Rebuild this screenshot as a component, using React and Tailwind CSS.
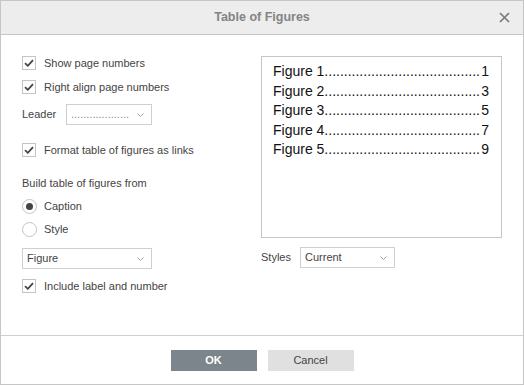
const font = { fontFamily: '"Liberation Sans", Arial, sans-serif' };

function Check({ label, className = "" }) {
  return (
    <label className={`flex items-center h-4 ${className}`}>
      <span className="w-[14px] h-[14px] border border-[#c4c4c4] bg-white flex items-center justify-center">
        <svg width="10" height="8" viewBox="0 0 10 8">
          <path d="M1 4.2 L3.8 6.8 L9 1.2" fill="none" stroke="#444" strokeWidth="1.8" />
        </svg>
      </span>
      <span className="ml-[8px] text-[11px] text-[#444]">{label}</span>
    </label>
  );
}

function Radio({ label, checked, className = "" }) {
  return (
    <label className={`flex items-center h-4 ${className}`}>
      <span className="w-[15px] h-[15px] rounded-full border border-[#c4c4c4] bg-white flex items-center justify-center">
        {checked && <span className="w-[7px] h-[7px] rounded-full bg-[#444]" />}
      </span>
      <span className="ml-[7px] text-[11px] text-[#444]">{label}</span>
    </label>
  );
}

function Chevron() {
  return (
    <svg width="7" height="4" viewBox="0 0 7 4" className="shrink-0">
      <path d="M0.5 0.5 L3.5 3.5 L6.5 0.5" fill="none" stroke="#9a9a9a" strokeWidth="0.9" />
    </svg>
  );
}

function Select({ value, className = "", muted }) {
  return (
    <div className={`h-[21px] border border-[#cfcfcf] bg-white flex items-center pl-[4px] pr-[7px] ${className}`}>
      <span className={`flex-1 whitespace-nowrap text-[11px] ${muted ? "text-[#888]" : "text-[#444]"}`}>{value}</span>
      <Chevron />
    </div>
  );
}

const entries = [
  ["Figure 1", "1"],
  ["Figure 2", "3"],
  ["Figure 3", "5"],
  ["Figure 4", "7"],
  ["Figure 5", "9"],
];

const leader = "........................................";

export default function App() {
  return (
    <div style={font} className="w-[524px] h-[385px] bg-white border border-[#c6c6c6] flex flex-col overflow-hidden">
      {/* header */}
      <div className="h-[34px] shrink-0 bg-[#ededed] border-b border-[#c6c6c6] relative flex items-center justify-center">
        <span className="text-[12.5px] font-bold text-[#848484]">Table of Figures</span>
        <svg width="11" height="11" viewBox="0 0 11 11" className="absolute right-[13px] top-[11px]">
          <path d="M1 1 L10 10 M10 1 L1 10" stroke="#777" strokeWidth="1.6" />
        </svg>
      </div>

      {/* body */}
      <div className="flex-1 flex">
        <div className="w-[260px] pl-[21px] pt-[20px] flex flex-col">
          <Check label="Show page numbers" />
          <Check label="Right align page numbers" className="mt-[8px]" />
          <div className="flex items-center mt-[9px]">
            <span className="text-[11px] text-[#444] w-[44px]">Leader</span>
            <Select value="..................." muted className="w-[86px]" />
          </div>
          <Check label="Format table of figures as links" className="mt-[17px]" />
          <div className="mt-[17px] h-4 flex items-center text-[11px] text-[#444]">Build table of figures from</div>
          <Radio label="Caption" checked className="mt-[7px]" />
          <Radio label="Style" className="mt-[7px]" />
          <Select value="Figure" className="w-[130px] mt-[11px]" />
          <Check label="Include label and number" className="mt-[9px]" />
        </div>

        <div className="flex flex-col pt-[21px]">
          <div className="w-[241px] h-[182px] border border-[#c6c6c6] pl-[11px] pr-[12px] pt-[5px] text-[14px] leading-[19.5px] text-[#111]">
            {entries.map(([name, page]) => (
              <div key={name} className="flex justify-between whitespace-nowrap">
                <span>{name}{leader}</span>
                <span>{page}</span>
              </div>
            ))}
          </div>
          <div className="flex items-center mt-[9px]">
            <span className="text-[11px] text-[#444] w-[39px]">Styles</span>
            <Select value="Current" className="w-[95px]" />
          </div>
        </div>
      </div>

      {/* footer */}
      <div className="h-[49px] shrink-0 border-t border-[#d0d0d0] flex justify-center pt-[14px] gap-[11px]">
        <button className="w-[86px] h-[21px] bg-[#7d858c] text-white text-[11px] font-bold">OK</button>
        <button className="w-[86px] h-[21px] bg-[#e0e0e0] text-[#444] text-[11px]">Cancel</button>
      </div>
    </div>
  );
}
